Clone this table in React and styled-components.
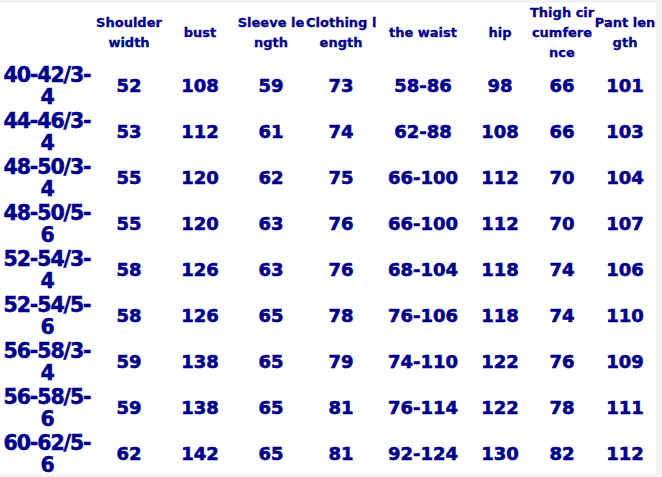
import React from "react";
import styled, { createGlobalStyle } from "styled-components";

const Global = createGlobalStyle`
  html, body { margin: 0; padding: 0; background: #f3f3f3; }
  body { font-family: "DejaVu Sans", Verdana, sans-serif; }
`;

const COLS = "94px 70px 72px 70px 70px 94px 60px 64px 62px";

const Sheet = styled.div`
  width: 656px;
  height: 471px;
  margin-top: 3px;
  background: #ffffff;
  overflow: hidden;
  color: #00008b;
  font-weight: bold;
`;

const Row = styled.div`
  display: grid;
  grid-template-columns: ${COLS};
  height: ${(p) => p.$h}px;
  align-items: center;
`;

const HeadCell = styled.div`
  font-size: 13px;
  line-height: 20px;
  text-align: center;
  white-space: nowrap;
  -webkit-text-stroke: 0.3px #00008b;
`;

const LabelCell = styled.div`
  font-size: 20.5px;
  line-height: 22px;
  letter-spacing: -1.1px;
  text-align: center;
  white-space: nowrap;
  -webkit-text-stroke: 0.5px #00008b;
`;

const ValueCell = styled.div`
  font-size: 18px;
  line-height: 22px;
  text-align: center;
  white-space: nowrap;
  -webkit-text-stroke: 0.6px #00008b;
`;

const headers = [
  [],
  ["Shoulder", "width"],
  ["bust"],
  ["Sleeve le", "ngth"],
  ["Clothing l", "ength"],
  ["the waist"],
  ["hip"],
  ["Thigh cir", "cumfere", "nce"],
  ["Pant len", "gth"],
];

const rows = [
  ["40-42/3-", "4", "52", "108", "59", "73", "58-86", "98", "66", "101"],
  ["44-46/3-", "4", "53", "112", "61", "74", "62-88", "108", "66", "103"],
  ["48-50/3-", "4", "55", "120", "62", "75", "66-100", "112", "70", "104"],
  ["48-50/5-", "6", "55", "120", "63", "76", "66-100", "112", "70", "107"],
  ["52-54/3-", "4", "58", "126", "63", "76", "68-104", "118", "74", "106"],
  ["52-54/5-", "6", "58", "126", "65", "78", "76-106", "118", "74", "110"],
  ["56-58/3-", "4", "59", "138", "65", "79", "74-110", "122", "76", "109"],
  ["56-58/5-", "6", "59", "138", "65", "81", "76-114", "122", "78", "111"],
  ["60-62/5-", "6", "62", "142", "65", "81", "92-124", "130", "82", "112"],
];

export default function App() {
  return (
    <>
      <Global />
      <Sheet>
        <Row $h={60}>
          {headers.map((lines, i) => (
            <HeadCell key={i}>
              {lines.map((l, j) => (
                <React.Fragment key={j}>
                  {j > 0 && <br />}
                  {l}
                </React.Fragment>
              ))}
            </HeadCell>
          ))}
        </Row>
        {rows.map((r, i) => (
          <Row $h={46} key={i}>
            <LabelCell>
              {r[0]}
              <br />
              {r[1]}
            </LabelCell>
            {r.slice(2).map((v, j) => (
              <ValueCell key={j}>{v}</ValueCell>
            ))}
          </Row>
        ))}
      </Sheet>
    </>
  );
}
